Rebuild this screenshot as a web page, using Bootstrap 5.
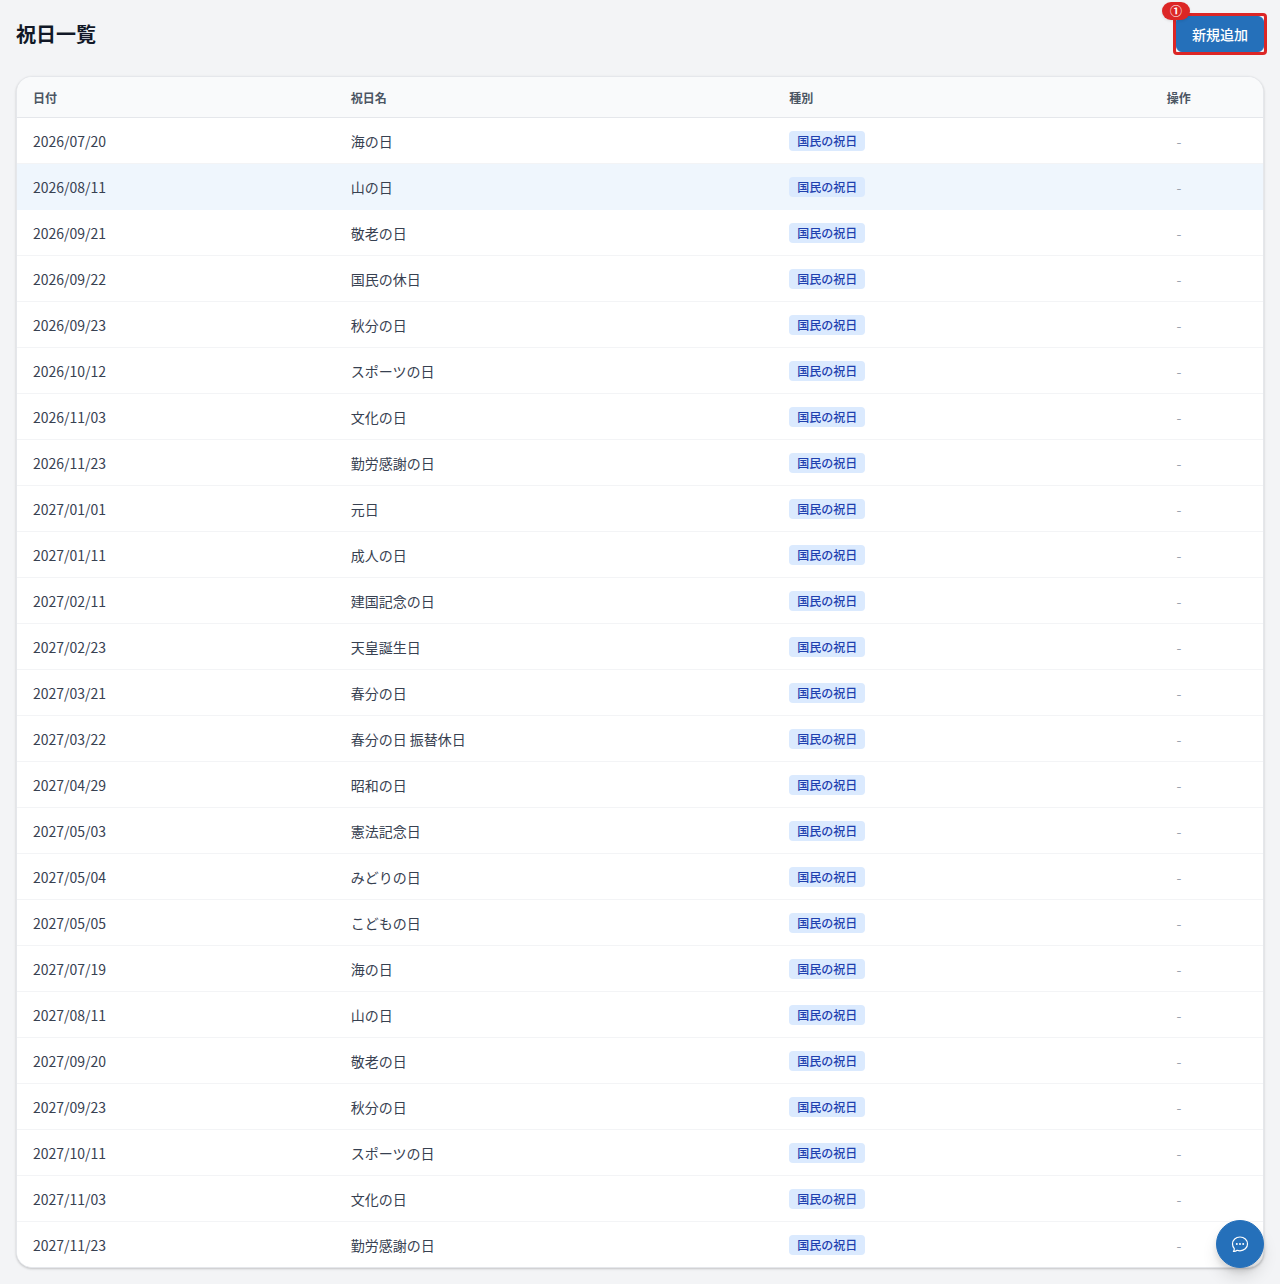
<!DOCTYPE html>
<html lang="ja">
<head>
<meta charset="utf-8">
<meta name="viewport" content="width=device-width, initial-scale=1">
<title>祝日一覧</title>
<link href="https://cdn.jsdelivr.net/npm/bootstrap@5.3.0/dist/css/bootstrap.min.css" rel="stylesheet">
<style>
  body { background: #f3f4f6; color: #374151; font-family: "Noto Sans CJK JP", sans-serif; font-size: 14px; line-height: 20px; }
  .page-title { font-size: 20px; line-height: 28px; font-weight: 700; color: #111827; }
  .btn-brand { --bs-btn-color: #fff; --bs-btn-bg: #2570ba; --bs-btn-border-color: #2570ba; --bs-btn-hover-color: #fff; --bs-btn-hover-bg: #1e5f9f; --bs-btn-hover-border-color: #1e5f9f; }
  .btn-add { --bs-btn-padding-x: 15px; --bs-btn-padding-y: 7px; --bs-btn-font-size: 14px; --bs-btn-line-height: 20px; --bs-btn-font-weight: 500; --bs-btn-border-radius: 6px; }
  .callout-frame { inset: -3px; border: 3px solid #dc2626; border-radius: 4px; pointer-events: none; }
  .callout-number { top: -14px; left: -14px; padding: 0 8px; border-radius: 9px; background: #dc2626; color: #fff; font-size: 12px; line-height: 18px; font-weight: 700; box-shadow: 0 1px 3px rgba(0,0,0,.1); }
  .list-card { border: 1px solid #e5e7eb; border-radius: 16px; box-shadow: 0 1px 3px rgba(0,0,0,.1), 0 1px 2px rgba(0,0,0,.1); }
  .holiday-table { --bs-table-color: #374151; --bs-table-bg: #fff; table-layout: fixed; }
  .holiday-table th { padding: 13px 16px 11px; border-color: #e5e7eb; background: #f9fafb; color: #4b5563; font-size: 12px; line-height: 16px; font-weight: 600; }
  .holiday-table td { padding: 13px 16px 12px; height: 46px; border-color: #f3f4f6; vertical-align: top; }
  .holiday-table tbody tr:last-child td { border-bottom: 0; height: 45px; }
  .holiday-table .row-current td { background: #eff6fd; border-color: #eff6fd; }
  .col-date { width: 25.5%; }
  .col-name { width: 35.2%; }
  .col-kind { width: 25.8%; }
  .kind-label { display: block; width: fit-content; padding: 2px 8px; border-radius: 4px; background: #dbeafe; color: #1e40af; font-size: 12px; line-height: 16px; font-weight: 500; }
  .holiday-table .no-action { color: #9ca3af; }
  .chat-button { right: 16px; bottom: 16px; width: 48px; height: 48px; box-shadow: 0 10px 15px rgba(0,0,0,.1), 0 4px 6px rgba(0,0,0,.1); }
</style>
</head>
<body>
<main class="p-3">
  <header class="d-flex justify-content-between align-items-center mb-4">
    <h1 class="page-title m-0">祝日一覧</h1>
    <div class="position-relative">
      <button type="button" class="btn btn-brand btn-add d-block">新規追加</button>
      <span class="callout-frame position-absolute"></span>
      <span class="callout-number position-absolute">①</span>
    </div>
  </header>
  <section class="list-card bg-white overflow-hidden">
    <table class="table holiday-table mb-0">
      <colgroup><col class="col-date"><col class="col-name"><col class="col-kind"><col></colgroup>
      <thead>
        <tr><th scope="col">日付</th><th scope="col">祝日名</th><th scope="col">種別</th><th scope="col" class="text-center">操作</th></tr>
      </thead>
      <tbody>
        <tr><td>2026/07/20</td><td>海の日</td><td><span class="kind-label">国民の祝日</span></td><td class="text-center no-action">-</td></tr>
        <tr class="row-current"><td>2026/08/11</td><td>山の日</td><td><span class="kind-label">国民の祝日</span></td><td class="text-center no-action">-</td></tr>
        <tr><td>2026/09/21</td><td>敬老の日</td><td><span class="kind-label">国民の祝日</span></td><td class="text-center no-action">-</td></tr>
        <tr><td>2026/09/22</td><td>国民の休日</td><td><span class="kind-label">国民の祝日</span></td><td class="text-center no-action">-</td></tr>
        <tr><td>2026/09/23</td><td>秋分の日</td><td><span class="kind-label">国民の祝日</span></td><td class="text-center no-action">-</td></tr>
        <tr><td>2026/10/12</td><td>スポーツの日</td><td><span class="kind-label">国民の祝日</span></td><td class="text-center no-action">-</td></tr>
        <tr><td>2026/11/03</td><td>文化の日</td><td><span class="kind-label">国民の祝日</span></td><td class="text-center no-action">-</td></tr>
        <tr><td>2026/11/23</td><td>勤労感謝の日</td><td><span class="kind-label">国民の祝日</span></td><td class="text-center no-action">-</td></tr>
        <tr><td>2027/01/01</td><td>元日</td><td><span class="kind-label">国民の祝日</span></td><td class="text-center no-action">-</td></tr>
        <tr><td>2027/01/11</td><td>成人の日</td><td><span class="kind-label">国民の祝日</span></td><td class="text-center no-action">-</td></tr>
        <tr><td>2027/02/11</td><td>建国記念の日</td><td><span class="kind-label">国民の祝日</span></td><td class="text-center no-action">-</td></tr>
        <tr><td>2027/02/23</td><td>天皇誕生日</td><td><span class="kind-label">国民の祝日</span></td><td class="text-center no-action">-</td></tr>
        <tr><td>2027/03/21</td><td>春分の日</td><td><span class="kind-label">国民の祝日</span></td><td class="text-center no-action">-</td></tr>
        <tr><td>2027/03/22</td><td>春分の日 振替休日</td><td><span class="kind-label">国民の祝日</span></td><td class="text-center no-action">-</td></tr>
        <tr><td>2027/04/29</td><td>昭和の日</td><td><span class="kind-label">国民の祝日</span></td><td class="text-center no-action">-</td></tr>
        <tr><td>2027/05/03</td><td>憲法記念日</td><td><span class="kind-label">国民の祝日</span></td><td class="text-center no-action">-</td></tr>
        <tr><td>2027/05/04</td><td>みどりの日</td><td><span class="kind-label">国民の祝日</span></td><td class="text-center no-action">-</td></tr>
        <tr><td>2027/05/05</td><td>こどもの日</td><td><span class="kind-label">国民の祝日</span></td><td class="text-center no-action">-</td></tr>
        <tr><td>2027/07/19</td><td>海の日</td><td><span class="kind-label">国民の祝日</span></td><td class="text-center no-action">-</td></tr>
        <tr><td>2027/08/11</td><td>山の日</td><td><span class="kind-label">国民の祝日</span></td><td class="text-center no-action">-</td></tr>
        <tr><td>2027/09/20</td><td>敬老の日</td><td><span class="kind-label">国民の祝日</span></td><td class="text-center no-action">-</td></tr>
        <tr><td>2027/09/23</td><td>秋分の日</td><td><span class="kind-label">国民の祝日</span></td><td class="text-center no-action">-</td></tr>
        <tr><td>2027/10/11</td><td>スポーツの日</td><td><span class="kind-label">国民の祝日</span></td><td class="text-center no-action">-</td></tr>
        <tr><td>2027/11/03</td><td>文化の日</td><td><span class="kind-label">国民の祝日</span></td><td class="text-center no-action">-</td></tr>
        <tr><td>2027/11/23</td><td>勤労感謝の日</td><td><span class="kind-label">国民の祝日</span></td><td class="text-center no-action">-</td></tr>
      </tbody>
    </table>
  </section>
</main>
<button type="button" class="btn btn-brand chat-button rounded-circle position-fixed d-flex align-items-center justify-content-center p-0" aria-label="チャット">
  <svg width="20" height="20" viewBox="0 0 20 20" fill="none" stroke="currentColor" stroke-width="1.2" stroke-linecap="round" stroke-linejoin="round" aria-hidden="true">
    <path d="M10 3c4.200 0 7.500 3 7.500 6.900s-3.300 6.900-7.500 6.900c-1 0-2-.2-2.900-.5-1 .8-2.300 1.200-3.700 1 .7-.8 1-1.700.9-2.700C3.200 13.300 2.500 11.700 2.500 9.900 2.500 6 5.800 3 10 3Z"/>
    <g fill="currentColor" stroke="none"><circle cx="6.800" cy="10" r="1"/><circle cx="10" cy="10" r="1"/><circle cx="13.200" cy="10" r="1"/></g>
  </svg>
</button>
<script src="https://cdn.jsdelivr.net/npm/bootstrap@5.3.0/dist/js/bootstrap.bundle.min.js"></script>
</body>
</html>
